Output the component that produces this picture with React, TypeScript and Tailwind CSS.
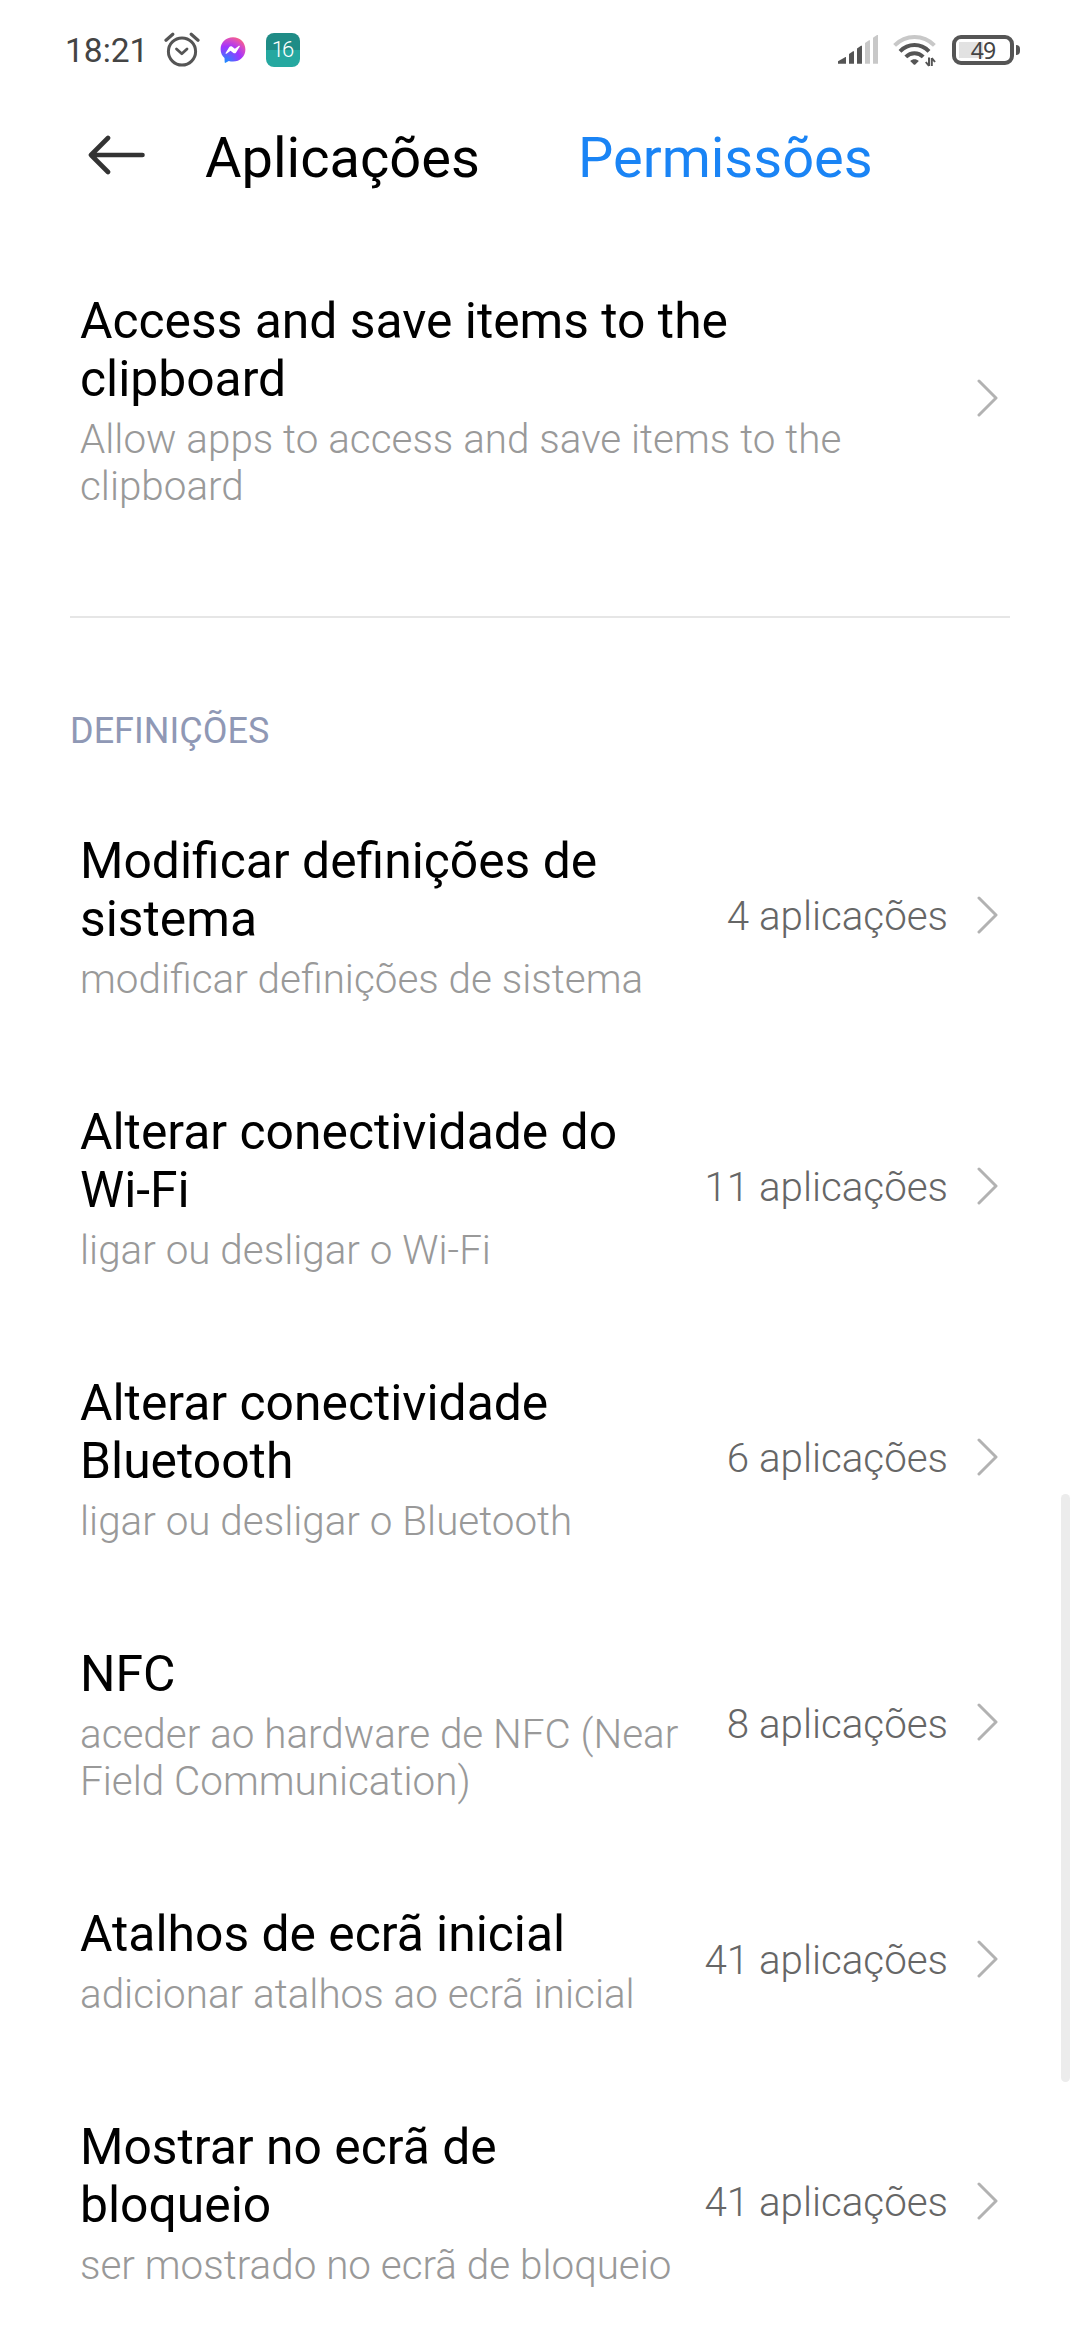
const permissions = [
  {
    title: "Modificar definições de sistema",
    description: "modificar definições de sistema",
    count: 4,
  },
  {
    title: "Alterar conectividade do Wi-Fi",
    description: "ligar ou desligar o Wi-Fi",
    count: 11,
  },
  {
    title: "Alterar conectividade Bluetooth",
    description: "ligar ou desligar o Bluetooth",
    count: 6,
  },
  {
    title: "NFC",
    description: "aceder ao hardware de NFC (Near Field Communication)",
    count: 8,
  },
  {
    title: "Atalhos de ecrã inicial",
    description: "adicionar atalhos ao ecrã inicial",
    count: 41,
  },
  {
    title: "Mostrar no ecrã de bloqueio",
    description: "ser mostrado no ecrã de bloqueio",
    count: 41,
  },
]

function AlarmIcon() {
  return (
    <svg width="36" height="36" viewBox="0 0 36 36" fill="none" stroke="#555" strokeLinecap="round" strokeLinejoin="round">
      <circle cx="18" cy="19.5" r="13.6" strokeWidth="3" />
      <path d="M12.5 17l5.3 4.8 5.2-4.8" strokeWidth="2.8" />
      <path d="M2 8.2L8.8 2.3M34 8.2L27.2 2.3" strokeWidth="3.2" />
    </svg>
  )
}

function MessengerIcon() {
  return (
    <svg width="26" height="26" viewBox="0 0 26 26">
      <defs>
        <radialGradient id="messenger" cx="0.2" cy="1" r="1.15">
          <stop offset="0" stopColor="#1690ff" />
          <stop offset="0.55" stopColor="#a033ff" />
          <stop offset="0.8" stopColor="#d84cc4" />
          <stop offset="1" stopColor="#ff6575" />
        </radialGradient>
      </defs>
      <path
        d="M13 0.3C5.8 0.3 0.6 5.5 0.6 12.3c0 3.6 1.5 6.6 3.9 8.7l.2 4.3c0 .5.5.7.9.5l3.2-1.8c1.3.4 2.7.6 4.2.6 7.2 0 12.4-5.3 12.4-12.1S20.2 .3 13 .3z"
        fill="url(#messenger)"
      />
      <path d="M5.6 16l3.7-5.9c.6-.9 1.8-1.2 2.7-.5l2.9 2.2 4-3c.5-.4 1.2.2.9.8L16.1 15.4c-.6.9-1.8 1.2-2.7.5l-2.9-2.2-4 3c-.6.4-1.2-.2-.9-.7z" fill="#fff" />
    </svg>
  )
}

function SignalIcon() {
  return (
    <svg width="41" height="30" viewBox="0 0 41 30">
      <g fill="#555">
        <path d="M0 28.7v-2.5L7.5 22H8v6.7z" />
        <path d="M11 28.7V19l4-2.7h1v12.4z" />
        <path d="M19 28.7V13.5l4-2.7h1v17.9z" />
      </g>
      <g fill="#c8c8c8">
        <path d="M27 28.7V8l4-2.7h1v23.4z" />
        <path d="M35 28.7V2.8L39 0h1v28.7z" />
      </g>
    </svg>
  )
}

function WifiIcon() {
  return (
    <svg width="44" height="34" viewBox="0 0 44 34" fill="none">
      <path d="M1.6 11.4C12.7.2 30.3.2 41.4 11.4" stroke="#c8c8c8" strokeWidth="4" />
      <path d="M7 17.3c8.2-8.3 20.8-8.3 29 0" stroke="#555" strokeWidth="4" />
      <path d="M12.8 22.9c5-4.9 12.4-4.9 17.4 0" stroke="#555" strokeWidth="4" />
      <path d="M17.2 27c2.5-2.3 6.1-2.3 8.6 0l-3.5 3.5c-.5.4-1.1.4-1.6 0z" fill="#555" />
      <path d="M36 23.5v8.5M36 32l-3.2-4M38.8 32v-8M38.8 24l3.2 4" stroke="#555" strokeWidth="2" />
    </svg>
  )
}

function BackArrow() {
  return (
    <svg width="58" height="40" viewBox="0 0 58 40" fill="none" stroke="#333" strokeWidth="4.6" strokeLinecap="round" strokeLinejoin="round">
      <path d="M54.5 20H3M20 3L3 20l17 17" />
    </svg>
  )
}

function Chevron() {
  return (
    <svg className="mb-[6px] shrink-0" width="21" height="38" viewBox="0 0 21 38" fill="none" stroke="#b2b2b2" strokeWidth="3" strokeLinecap="round" strokeLinejoin="round">
      <path d="M2 2l17 17L2 36" />
    </svg>
  )
}

function StatusBar() {
  return (
    <div className="flex h-[100px] items-center justify-between pr-[60px] pl-[65px] text-[#444]">
      <div className="flex items-center">
        <span className="w-[99px] pt-[2px] text-[33.5px] leading-[40px]">18:21</span>
        <AlarmIcon />
        <span className="mr-5 ml-5">
          <MessengerIcon />
        </span>
        <span className="flex h-[34px] w-[34px] items-center justify-center rounded-[8px] bg-linear-to-b from-[#1f8c86] from-50% to-[#25a8a0] to-50% pr-[2px] text-[22px] leading-none font-light tracking-[-2px] text-white">
          16
        </span>
      </div>
      <div className="flex items-center">
        <SignalIcon />
        <span className="mt-[2px] ml-[14px]">
          <WifiIcon />
        </span>
        <div className="ml-[15px] flex h-[30px] w-[62px] items-center justify-center rounded-[9px] border-4 border-[#555] bg-linear-to-r from-[#e2e2e2] to-[#e2e2e2] bg-[length:24px_16px] bg-[position:3px_3px] bg-no-repeat font-['Noto_Sans'] text-[23px] leading-none tracking-[-0.8px]">
          49
        </div>
        <div className="ml-[2px] h-[10px] w-1 rounded-r-sm bg-[#555]" />
      </div>
    </div>
  )
}

type RowProps = {
  title: string
  description: string
  count?: number
}

function PermissionRow({ title, description, count }: RowProps) {
  return (
    <div className="flex items-center py-[50px] pr-[82px] pl-[80px]">
      <div className="flex-1 pr-6">
        <h3 className="text-[49.8px] leading-[58px] text-black">{title}</h3>
        <p className="mt-2 text-[40.4px] leading-[47px] font-light text-[#999]">{description}</p>
      </div>
      {count !== undefined && (
        <span className="mb-[2px] text-[40.3px] leading-[47px] font-light whitespace-nowrap text-[#666]">
          {count} aplicações
        </span>
      )}
      <span className="ml-[29px]">
        <Chevron />
      </span>
    </div>
  )
}

export default function App() {
  return (
    <div className="relative h-[2340px] w-[1080px] overflow-hidden bg-white font-['Roboto',sans-serif]">
      <StatusBar />

      {/* Tabs */}
      <div className="flex h-[116px] items-center pl-[88px] text-[56px] leading-[64px]">
        <span className="mb-[6px]">
          <BackArrow />
        </span>
        <span className="w-[372px] pl-[59px] text-black">Aplicações</span>
        <span className="pl-[60px] text-[#1a84f5]">Permissões</span>
      </div>

      <div className="pt-[26px]">
        <PermissionRow
          title="Access and save items to the clipboard"
          description="Allow apps to access and save items to the clipboard"
        />
      </div>

      <div className="mx-[70px] mt-[56px] h-[2px] bg-[#e6e6e6]" />

      <h2 className="mt-[92px] pl-[70px] text-[36px] leading-[42px] text-[#8f98b5]">DEFINIÇÕES</h2>

      <div className="mt-[30px]">
        {permissions.map((permission) => (
          <PermissionRow key={permission.title} {...permission} />
        ))}
      </div>

      {/* Scrollbar thumb */}
      <div className="absolute top-[1494px] right-[10px] h-[588px] w-[9px] rounded-full bg-[#ececec]" />
    </div>
  )
}
